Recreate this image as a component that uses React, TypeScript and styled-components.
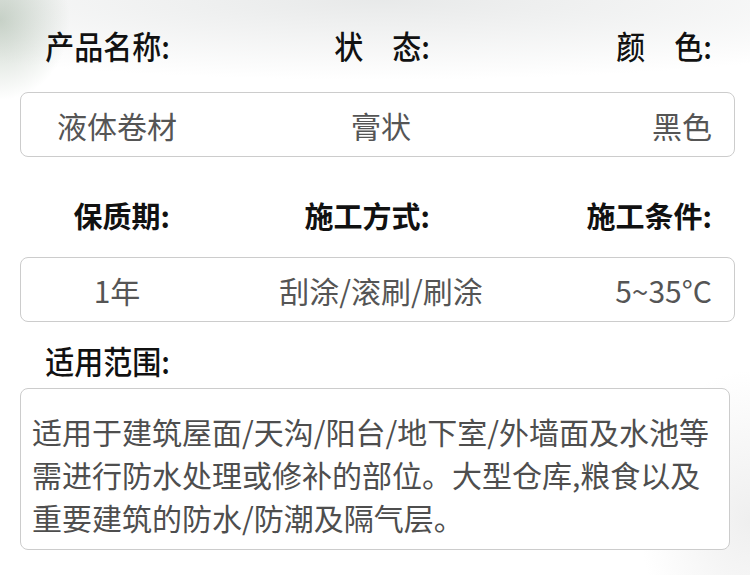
import React from 'react';
import styled, { createGlobalStyle } from 'styled-components';

const GlobalStyle = createGlobalStyle`
	html, body {
		margin: 0;
		padding: 0;
		background: #ffffff;
	}
	body {
		font-family: "Noto Sans CJK SC", "Noto Sans", sans-serif;
	}
`;

const specs = [
	{
		labels: ['产品名称:', '状\u3000态:', '颜\u3000色:'],
		values: ['液体卷材', '膏状', '黑色'],
	},
	{
		labels: ['保质期:', '施工方式:', '施工条件:'],
		values: ['1年', '刮涂/滚刷/刷涂', '5~35°C'],
	},
];

const usage = [
	'适用于建筑屋面/天沟/阳台/地下室/外墙面及水池等',
	'需进行防水处理或修补的部位。大型仓库,粮食以及',
	'重要建筑的防水/防潮及隔气层。',
];

export default function App() {
	return (
		<Page>
			<GlobalStyle />
			<LabelRow $top={25}>
				{specs[0].labels.map((l) => <Label key={l} $narrow>{l}</Label>)}
			</LabelRow>
			<ValueBox $top={27}>
				{specs[0].values.map((v) => <Value key={v}>{v}</Value>)}
			</ValueBox>

			<LabelRow $top={38}>
				{specs[1].labels.map((l) => <Label key={l}>{l}</Label>)}
			</LabelRow>
			<ValueBox $top={22}>
				{specs[1].values.map((v) => <Value key={v}>{v}</Value>)}
			</ValueBox>

			<LabelRow $top={18}>
				<Label $narrow>适用范围:</Label>
			</LabelRow>
			<TextBox>
				{usage.map((line) => <Line key={line}>{line}</Line>)}
			</TextBox>
		</Page>
	);
}

const Page = styled.div`
	width: 750px;
	height: 575px;
	box-sizing: border-box;
	overflow: hidden;
	padding: 0 15px 0 20px;
	background:
		radial-gradient(ellipse 70px 80px at 0px 20px, rgba(150, 170, 150, 0.5), rgba(150, 170, 150, 0) 100%),
		radial-gradient(ellipse 620px 80px at 380px 0px, rgba(222, 224, 224, 0.7), rgba(232, 234, 234, 0) 100%),
		radial-gradient(ellipse 110px 150px at 750px 520px, rgba(228, 228, 228, 0.6), rgba(240, 240, 240, 0) 100%),
		#ffffff;
`;

const LabelRow = styled.div<{ $top: number }>`
	display: grid;
	grid-template-columns: 150px 260px 1fr;
	padding-right: 23px;
	margin-top: ${(p) => p.$top}px;
	height: 40px;
	align-items: center;
`;

const Label = styled.div<{ $narrow?: boolean }>`
	justify-self: end;
	font-size: 29px;
	font-weight: ${(p) => (p.$narrow ? 500 : 700)};
	line-height: 40px;
	color: #111111;
	white-space: pre;
	transform: ${(p) => (p.$narrow ? 'scaleY(1.08)' : 'none')};
`;

const ValueBox = styled.div<{ $top: number }>`
	display: grid;
	grid-template-columns: 192px 336px 1fr;
	align-items: center;
	box-sizing: border-box;
	width: 715px;
	height: 65px;
	margin-top: ${(p) => p.$top}px;
	padding-right: 22px;
	border: 1px solid #cccccc;
	border-radius: 8px;
	background: #ffffff;

	& > :nth-child(3) {
		justify-self: end;
	}
`;

const Value = styled.div`
	justify-self: center;
	font-size: 30px;
	font-weight: 400;
	line-height: 40px;
	color: #555555;
	white-space: nowrap;
`;

const TextBox = styled.div`
	box-sizing: border-box;
	width: 710px;
	height: 162px;
	margin-top: 8px;
	padding: 21px 0 0 11px;
	border: 1px solid #cccccc;
	border-radius: 8px;
	background: #ffffff;
`;

const Line = styled.div`
	font-size: 30px;
	line-height: 43px;
	color: #4e4e4e;
	white-space: nowrap;
`;
